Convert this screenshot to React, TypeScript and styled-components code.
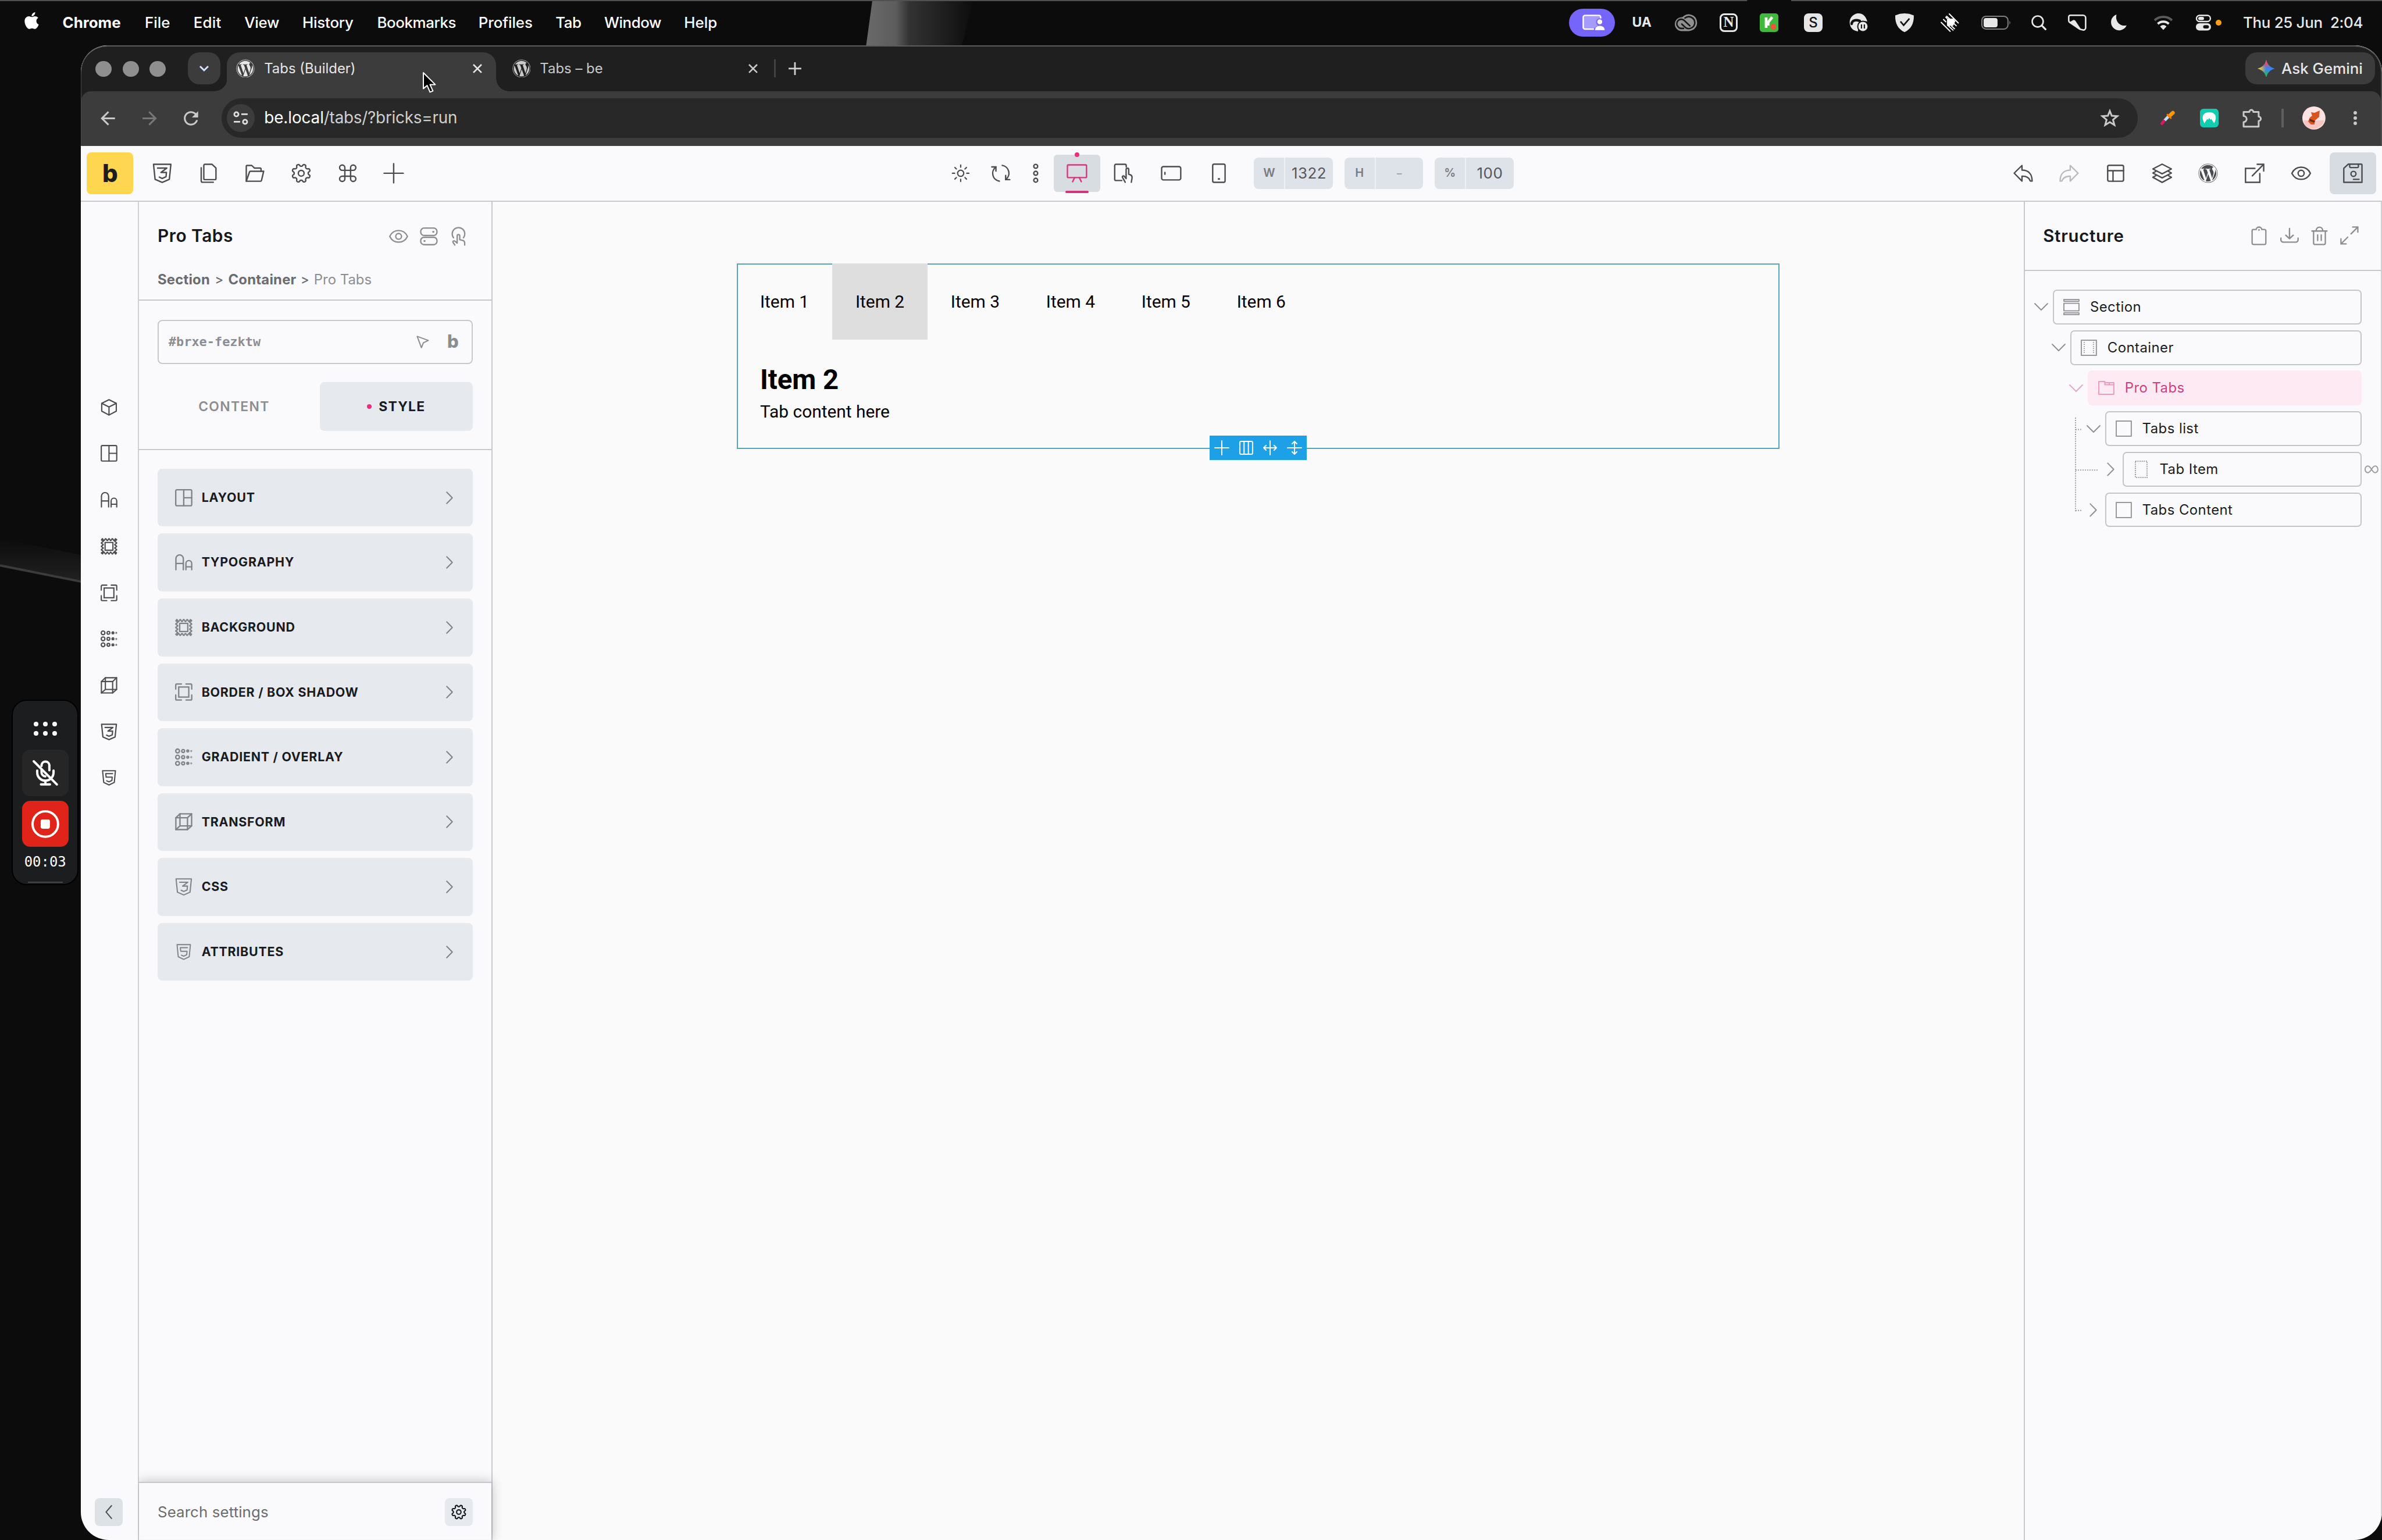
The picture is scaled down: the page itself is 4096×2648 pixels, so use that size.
import React from "react";
import styled, { createGlobalStyle, css } from "styled-components";
import { FaApple, FaWordpress } from "react-icons/fa";
import { MdArrowBack, MdArrowForward, MdRefresh } from "react-icons/md";

const SCALE = 4096 / 4112;
const line = "#c7c8cc";
const ink = "#4b4c50";
const muted = "#8c8d91";
const pink = "#d23a7c";
const panelBg = "#fafafc";

const GlobalStyle = createGlobalStyle`
  *, *::before, *::after { box-sizing: border-box; }
  html, body { margin: 0; padding: 0; background: #0b0b0b; overflow: hidden; }
  body { font-family: Inter, "Liberation Sans", sans-serif; }
`;

const Desktop = styled.div`
  position: relative;
  zoom: ${SCALE};
  width: 4112px;
  height: 2658px;
  overflow: hidden;
  display: flex;
  flex-direction: column;
  background: #0b0b0b;
`;

const Wallpaper = styled.svg`
  position: absolute;
  inset: 0;
  width: 4112px;
  height: 2658px;
`;

const Text = styled.span<{ $s: number; $w?: number; $c?: string; $ls?: number }>`
  display: block;
  white-space: pre;
  line-height: 1;
  font-size: ${(p) => p.$s}px;
  font-weight: ${(p) => p.$w ?? 400};
  color: ${(p) => p.$c ?? "inherit"};
  letter-spacing: ${(p) => p.$ls ?? 0}px;
`;

const Glyph = styled.svg.attrs({ fill: "none", stroke: "currentColor" })<{ $w: number; $h?: number; $sw?: number }>`
  display: block;
  flex: none;
  width: ${(p) => p.$w}px;
  height: ${(p) => p.$h ?? p.$w}px;
  stroke-width: ${(p) => p.$sw ?? 2.4};
  stroke-linejoin: round;
  stroke-linecap: round;
  overflow: visible;
`;

const Cell = styled.div<{ $w: number; $ml?: number; $c?: string; $start?: boolean; $h?: number }>`
  flex: none;
  width: ${(p) => p.$w}px;
  ${(p) => p.$h && css`height: ${p.$h}px;`}
  margin-left: ${(p) => p.$ml ?? 0}px;
  color: ${(p) => p.$c ?? "inherit"};
  display: flex;
  align-items: center;
  justify-content: ${(p) => (p.$start ? "flex-start" : "center")};
`;

/* ---------- icon drawings ---------- */

function gearPath(c: number, base: number, amp: number, teeth: number) {
  let d = "";
  for (let i = 0; i <= 160; i++) {
    const a = (i / 160) * Math.PI * 2;
    const k = -Math.cos(a * teeth + (teeth * Math.PI) / 2);
    const r = base + amp * Math.tanh(k * 1.8);
    d += `${i ? "L" : "M"}${(c + r * Math.cos(a)).toFixed(2)} ${(c + r * Math.sin(a)).toFixed(2)}`;
  }
  return d + "Z";
}

function scallopPath() {
  const lo = 3, hi = 27, n = 48;
  const pts: string[] = [];
  const off = (t: number) => -1.7 * Math.cos(t * Math.PI * 2 * 4);
  for (let i = 0; i < n; i++) { const t = i / n; pts.push(`${lo + (hi - lo) * t} ${lo + off(t)}`); }
  for (let i = 0; i < n; i++) { const t = i / n; pts.push(`${hi - off(t)} ${lo + (hi - lo) * t}`); }
  for (let i = 0; i < n; i++) { const t = i / n; pts.push(`${hi - (hi - lo) * t} ${hi - off(t)}`); }
  for (let i = 0; i < n; i++) { const t = i / n; pts.push(`${lo + off(t)} ${hi - (hi - lo) * t}`); }
  return "M" + pts.join("L") + "Z";
}

const shapes: Record<string, { vb: string; body: React.ReactNode }> = {
  css3: { vb: "0 0 34 34", body: <><path d="M2 1.5H32L29.3 27.5L17 32.8L4.7 27.5Z" /><path d="M9 8H25L14.8 15.5H24.3L23.6 23L17 26L12 23.6" /></> },
  html5: { vb: "0 0 34 34", body: <><path d="M3 1.5H31L28.5 27L17 32.5L5.5 27Z" /><path d="M24.8 8H9.8L10.8 15.5H24L23.2 22.8L17 25.8L12 23.6" /></> },
  pages: { vb: "0 0 34 34", body: <><path d="M8.5 3.5a2 2 0 0 1 2-2H22.5L29.5 8V26a2 2 0 0 1-2 2H10.5a2 2 0 0 1-2-2Z" /><path d="M4 7.5V30a2.5 2.5 0 0 0 2.5 2.5H25" /></> },
  folder: { vb: "0 0 34 34", body: <><path d="M2.5 30.5V5A1.5 1.5 0 0 1 4 3.5H12l4.5 4.5H26.5a1.5 1.5 0 0 1 1.5 1.5V13.5" /><path d="M2.5 30.8L8 14.8A1.8 1.8 0 0 1 9.7 13.5H32.5L28.8 29.4a1.8 1.8 0 0 1-1.8 1.4Z" /></> },
  gear: { vb: "0 0 34 34", body: <><path d={gearPath(17, 14, 2, 8)} /><circle cx="17" cy="17" r="5" /></> },
  command: { vb: "0 0 24 24", body: <path d="M15.5 5.2v13.6a3.2 3.2 0 1 0 3.2-3.2H5.3a3.2 3.2 0 1 0 3.2 3.2V5.2a3.2 3.2 0 1 0-3.2 3.2h13.4a3.2 3.2 0 1 0-3.2-3.2" /> },
  plus: { vb: "0 0 34 34", body: <path d="M17 .5V33.5M.5 17H33.5" /> },
  sun: { vb: "0 0 30 30", body: <><circle cx="15" cy="15" r="5.3" /><path d="M15 .8V4.5M15 25.5v3.7M.8 15H4.5M25.5 15h3.7M5 5l2.6 2.6M22.4 22.4L25 25M5 25l2.6-2.6M22.4 7.6L25 5" /></> },
  refresh: { vb: "0 0 34 34", body: <><path d="M8.5 6.2A13.6 13.6 0 0 0 14.5 30.6M25.5 27.8A13.6 13.6 0 0 0 19.5 3.4" /><path d="M1.5 6H8.6V13.2M32.5 28H25.4V20.8" strokeLinejoin="miter" /></> },
  more: { vb: "0 0 12 34", body: <><circle cx="6" cy="5" r="3.4" /><circle cx="6" cy="17" r="3.4" /><circle cx="6" cy="29" r="3.4" /></> },
  desktop: { vb: "0 0 36 32", body: <><rect x="1.5" y="1.5" width="33" height="22" rx="1.5" /><path d="M14 23.5L10.5 30.5M22 23.5L25.5 30.5" /></> },
  tabletTouch: { vb: "0 0 34 34", body: <><path d="M14 29.5H4A2.2 2.2 0 0 1 1.8 27.3V3.7A2.2 2.2 0 0 1 4 1.5H19.5A2.2 2.2 0 0 1 21.7 3.7V6" /><path d="M20 32.5L15.3 24.2C14.2 22 17 20.6 18.4 22.4L21.5 26.2V10.5C21.5 7.5 26 7.5 26 10.5V18.6L29 19.8C31.6 20.8 32 22.4 31.8 25L30.5 32.5" /></> },
  tabletWide: { vb: "0 0 36 26", body: <><rect x="1.5" y="1.5" width="33" height="23" rx="3" /><path d="M7.2 11.5v3" /></> },
  phone: { vb: "0 0 24 34", body: <><rect x="1.3" y="1.3" width="21.4" height="31.4" rx="2.5" /><path d="M11.4 26.8h1.2" strokeWidth="3" /></> },
  undo: { vb: "0 0 34 30", body: <path d="M1.5 14.8L15 1.5V9.6C27 9.6 32.5 17 32.5 28.5H29.5C27 21.5 22 19.8 15 20V28.5Z" /> },
  redo: { vb: "0 0 34 30", body: <path d="M32.5 14.8L19 1.5V9.6C7 9.6 1.5 17 1.5 28.5H4.5C7 21.5 12 19.8 19 20V28.5Z" /> },
  template: { vb: "0 0 30 30", body: <><rect x="1.3" y="1.3" width="27.4" height="27.4" rx="2.5" /><path d="M1.3 10.5H28.7M10.5 10.5V28.7" /></> },
  layers: { vb: "0 0 36 34", body: <><path d="M18 1.2L34 9.5L18 18L2 9.5Z" /><path d="M7.5 13.5L2 16.6L18 25L34 16.6L28.5 13.5" /><path d="M7.5 20.8L2 24L18 32.8L34 24L28.5 20.8" /></> },
  external: { vb: "0 0 34 34", body: <><path d="M17.5 8.5H1.3V32.7H26V17.5" strokeLinejoin="miter" /><path d="M13 21.5L32.3 1.8M21.5 1.5H32.7V13" strokeLinejoin="miter" /></> },
  eye: { vb: "0 0 34 24", body: <><path d="M1 12C4.5 4.8 11 1.5 17 1.5S29.5 4.8 33 12C29.5 19.2 23 22.5 17 22.5S4.5 19.2 1 12Z" /><circle cx="17" cy="12" r="5.2" /></> },
  save: { vb: "0 0 34 34", body: <><path d="M9 1.3H31.2a1.5 1.5 0 0 1 1.5 1.5V32.7H1.3V8.5Z" /><path d="M11.5 1.3V5.6A1.5 1.5 0 0 0 13 7.1H25A1.5 1.5 0 0 0 26.5 5.6V1.3M18 27.5H27.5" /><circle cx="18" cy="18" r="4.3" /></> },
  toggles: { vb: "0 0 32 32", body: <><rect x="1.5" y="1.2" width="29" height="13.2" rx="6" /><rect x="1.5" y="17.6" width="29" height="13.2" rx="6" /><path d="M23.7 7.8h.6M8 24.2h.6" strokeWidth="3.4" /></> },
  touch: { vb: "0 0 32 34", body: <><path d="M7.2 19.5A11.2 11.2 0 1 1 24.8 19.5" /><path d="M9.5 32.5L6.5 28.2C5 25.8 7.8 24 9.6 25.6L13.6 29V16C13.6 13 18.2 13 18.2 16V23L23.5 24.2C26.5 25 27.2 26.8 27 29.5V32.5" /></> },
  pointer: { vb: "0 0 24 24", body: <path d="M1.5 1.5L22.5 9.2L13.2 13.6L9.5 22.8Z" /> },
  box: { vb: "0 0 30 30", body: <><path d="M15 1.3L28 7.8V21.8L15 28.7L2 21.8V7.8Z" /><path d="M2 7.8L15 14.3L28 7.8M15 14.3V28.7" /></> },
  layout: { vb: "0 0 30 30", body: <><rect x="1.2" y="1.2" width="27.6" height="27.6" rx="2" /><path d="M15 1.2V28.8M15 15H28.8" /></> },
  type: { vb: "0 0 30 30", body: <><path d="M1.5 27.8V8.5a6.4 6.4 0 0 1 12.8 0V27.8M1.5 17H14.3" /><path d="M18.8 27.8V17a5 5 0 0 1 10 0V27.8M18.8 22.8H28.8" /></> },
  background: { vb: "0 0 30 30", body: <><path d={scallopPath()} /><rect x="8" y="8" width="14" height="14" /></> },
  border: { vb: "0 0 30 30", body: <><rect x="6.3" y="6.3" width="17.4" height="17.4" strokeLinejoin="miter" /><path d="M1.2 10V3A1.8 1.8 0 0 1 3 1.2H11M19 1.2H27A1.8 1.8 0 0 1 28.8 3V10M28.8 20V27A1.8 1.8 0 0 1 27 28.8H19M11 28.8H3A1.8 1.8 0 0 1 1.2 27V20" /></> },
  gradient: { vb: "0 0 30 30", body: <>{[4.3, 15, 25.7].map((y) => <g key={y}><circle cx="4.4" cy={y} r="3.3" /><circle cx="14" cy={y} r="2.5" /><circle cx="22" cy={y} r="1.6" /><circle cx="28" cy={y} r=".5" /></g>)}</> },
  transform: { vb: "0 0 30 30", body: <><path d="M1.4 8.2L8.5 1.4H28.6V22.3L21.5 28.6H1.4Z" /><path d="M1.4 8.2H21.5V28.6M21.5 8.2L28.6 1.4M8.5 1.4V22.3H28.6M8.5 22.3L1.4 28.6" /></> },
  right: { vb: "0 0 12 22", body: <path d="M1.2 1.2L10.8 11L1.2 20.8" /> },
  left: { vb: "0 0 12 24", body: <path d="M10.8 1L1.4 12L10.8 23" /> },
  down: { vb: "0 0 24 13", body: <path d="M1 1L12 12L23 1" /> },
  clipboard: { vb: "0 0 28 34", body: <><path d="M9 5.8H4A2.3 2.3 0 0 0 1.7 8.1V30.2A2.3 2.3 0 0 0 4 32.5H24A2.3 2.3 0 0 0 26.3 30.2V8.1A2.3 2.3 0 0 0 24 5.8H19C18.8 0 9.2 0 9 5.8" /><path d="M14 6.5v.1" strokeWidth="3" /></> },
  download: { vb: "0 0 32 26", body: <><path d="M1.2 17.5V20.5A4 4 0 0 0 5.2 24.5H26.8A4 4 0 0 0 30.8 20.5V17.5" /><path d="M16 1V18M9.5 12.5L16 18.5L22.5 12.5" /></> },
  trash: { vb: "0 0 30 34", body: <path d="M1.5 8.5H28.5M9 8.5C9 -.8 21 -.8 21 8.5M4.5 8.5V30A2.2 2.2 0 0 0 6.7 32.5H23.3A2.2 2.2 0 0 0 25.5 30V8.5M11.8 15.5V25.5M18.2 15.5V25.5" /> },
  expand: { vb: "0 0 34 34", body: <path d="M20 14L32 2M23 1.5H32.5V11M14 20L2 32M1.5 23V32.5H11" strokeLinejoin="miter" /> },
  section: { vb: "0 0 28 28", body: <><rect x="1" y="1" width="26" height="3" /><rect x="1" y="7.5" width="26" height="13" /><rect x="1" y="24" width="26" height="3" /></> },
  container: { vb: "0 0 28 28", body: <><rect x="1" y="1" width="26" height="26" /><path d="M6 4V25M22 4V25" strokeDasharray="1.5 2" strokeLinecap="butt" /></> },
  block: { vb: "0 0 28 28", body: <rect x="1" y="1" width="26" height="26" /> },
  div: { vb: "0 0 28 28", body: <rect x="4" y="0" width="20" height="28" strokeDasharray="1.8 1.8" strokeLinecap="butt" /> },
  tabs: { vb: "0 0 28 24", body: <><path d="M1 1H11.5V6.5H27V23H1Z" /><path d="M11.5 3H27V6.5M19 3V6.5" /></> },
  infinity: { vb: "0 0 24 14", body: <path d="M12 7C9.5 3 8 1.2 5.8 1.2a4.8 5.8 0 0 0 0 11.6C8 12.8 9.5 11 12 7C14.5 3 16 1.2 18.2 1.2a4.8 5.8 0 0 1 0 11.6C16 12.8 14.5 11 12 7Z" /> },
  columns: { vb: "0 0 24 24", body: <><rect x="1" y="1" width="22" height="22" rx="2" /><path d="M8.3 1V23M15.7 1V23" /></> },
  splitH: { vb: "0 0 24 24", body: <path d="M12 0V24M1 12H23M5 8L1 12L5 16M19 8L23 12L19 16" /> },
  splitV: { vb: "0 0 24 24", body: <path d="M0 12H24M12 1V23M8 5L12 1L16 5M8 19L12 23L16 19" /> },
  star: { vb: "0 0 30 30", body: <path d="M15 3.5L18.1 11.3L27.2 12L20.200 17.800L22.500 26.300L15 21.600L7.500 26.300L9.800 17.800L2.800 12L11.900 11.300Z" strokeLinejoin="miter" /> },
  puzzle: { vb: "0 0 34 34", body: <path d="M2 6.500H12A3.400 3.400 0 0 1 18.800 6.500H28V14.500A3.700 3.700 0 0 1 28 22V32H2V24A5 5 0 0 0 2 13.500Z" /> },
};

type IconProps = { name: string; w: number; h?: number; sw?: number };
const Icon = ({ name, w, h, sw }: IconProps) => (
  <Glyph viewBox={shapes[name].vb} $w={w} $h={h} $sw={sw}>{shapes[name].body}</Glyph>
);

/* ---------- macOS menu bar ---------- */

const MenuBar = styled.header`
  position: relative;
  flex: none;
  height: 78px;
  display: flex;
  align-items: center;
  padding: 0 34px 0 41px;
  color: #fff;
`;
const MenuItem = styled.div<{ $w: number }>`
  flex: none;
  width: ${(p) => p.$w}px;
`;
const AppleLogo = styled(FaApple)`
  display: block;
  margin: -6px 0 0 -3px;
`;
const Tray = styled.div`
  margin-left: auto;
  display: flex;
  align-items: center;
  color: #e8e8e8;
`;
const SharePill = styled.div`
  width: 80px;
  height: 48px;
  border-radius: 24px;
  background: #7565fb;
  display: flex;
  align-items: center;
  justify-content: center;
  padding-left: 6px;
`;
const Badge = styled.div<{ $bg: string; $c: string; $r: number; $line?: boolean }>`
  width: 32px;
  height: 32px;
  border-radius: ${(p) => p.$r}px;
  background: ${(p) => p.$bg};
  color: ${(p) => p.$c};
  ${(p) => p.$line && css`border: 3.5px solid #e8e8e8;`}
  display: flex;
  align-items: center;
  justify-content: center;
`;
const SerifLetter = styled.span`
  font: 700 25px/1 "Liberation Serif", serif;
`;
const OrangeDot = styled.div`
  width: 10px;
  height: 10px;
  border-radius: 50%;
  background: #ff9f14;
`;

const menus: [string, number, number][] = [
  ["Chrome", 142, 0], ["File", 84, 0], ["Edit", 88, 0.2], ["View", 100, -0.3], ["History", 129, -0.2],
  ["Bookmarks", 175, -0.4], ["Profiles", 133, -0.1], ["Tab", 84, -0.5], ["Window", 138, -0.4], ["Help", 80, 0],
];

const TopMenu = () => (
  <MenuBar>
    <MenuItem $w={67}><AppleLogo size={33} /></MenuItem>
    {menus.map(([label, w, ls], i) => (
      <MenuItem key={label} $w={w}><Text $s={26} $w={i ? 500 : 700} $ls={ls}>{label}</Text></MenuItem>
    ))}
    <Tray>
      <SharePill>
        <Glyph viewBox="0 0 40 28" $w={40} $h={28} $sw={2.6}>
          <rect x="3" y="3" width="27" height="20" fill="#a59bfd" stroke="none" />
          <path d="M19 25H4.5A3 3 0 0 1 1.5 22V4.5A3 3 0 0 1 4.5 1.5H28.5A3 3 0 0 1 31.5 4.5V6" stroke="#fff" />
          <circle cx="30" cy="13" r="6.5" fill="#7565fb" stroke="none" />
          <circle cx="30" cy="12.5" r="4.3" fill="#fff" stroke="none" />
          <path d="M21.5 27c0-5 3.5-8 8.5-8s9 3 9 8z" fill="#fff" stroke="#7565fb" strokeWidth="1" />
        </Glyph>
      </SharePill>
      <Cell $w={34} $ml={29}><Text $s={23} $w={700}>UA</Text></Cell>
      <Cell $w={40} $ml={39} $c="#909090">
        <Glyph viewBox="0 0 40 30" $w={40} $h={30}>
          <path d="M12 29.5H25A14.5 14.5 0 1 0 14 5.5A12 12 0 0 0 12 29.5Z" fill="currentColor" stroke="none" />
          <path d="M27 20.5L17.5 11.5A7.5 7.5 0 0 0 6.5 22A7.5 7.5 0 0 0 12 25H16" stroke="#161616" strokeWidth="2.6" />
          <path d="M13 17.5L20 24A10.5 10.5 0 0 0 35.5 15A10.5 10.5 0 0 0 18.5 7" stroke="#161616" strokeWidth="2.6" />
        </Glyph>
      </Cell>
      <Cell $w={32} $ml={38}><Badge $bg="transparent" $c="#e8e8e8" $r={8} $line><SerifLetter>N</SerifLetter></Badge></Cell>
      <Cell $w={32} $ml={38}>
        <Badge $bg="#41b93c" $c="#fff" $r={5}>
          <Glyph viewBox="0 0 32 32" $w={32} $sw={4.6}>
            <path d="M11 7V25M21.5 6.5L14.5 15.5V21" strokeLinecap="butt" />
            <circle cx="23.5" cy="23" r="5" fill="#f4523b" stroke="none" />
          </Glyph>
        </Badge>
      </Cell>
      <Cell $w={32} $ml={44}><Badge $bg="#e6e6e6" $c="#111" $r={8}><Text $s={24} $w={500}>S</Text></Badge></Cell>
      <Cell $w={32} $ml={46}>
        <Glyph viewBox="0 0 32 32" $w={32} $sw={2}>
          <path d="M2 22C-3 8 8 0 16 0S29 6 31 14C24 12 16 14 15 24V31C8 30 4 27 2 22Z" fill="currentColor" stroke="none" />
          <path d="M4 18C5 11 12 11 18 13" stroke="#111" strokeWidth="4.5" /><circle cx="12" cy="15.5" r="1.8" fill="#e8e8e8" stroke="none" />
          <circle cx="23.5" cy="22.5" r="9" fill="currentColor" stroke="#111" />
          <path d="M21 19V26M26 19V26" stroke="#111" strokeLinecap="butt" />
        </Glyph>
      </Cell>
      <Cell $w={32} $ml={48}>
        <Glyph viewBox="0 0 32 32" $w={32} $sw={2.6}>
          <path d="M0 3.5Q16 -3.5 32 3.5C32.5 18 27 27 16 32.5C5 27 -.5 18 0 3.5Z" fill="currentColor" stroke="none" />
          <path d="M9 14L14.5 20.5L24.5 9" stroke="#111" strokeLinecap="butt" strokeLinejoin="miter" />
        </Glyph>
      </Cell>
      <Cell $w={32} $ml={46} $c="#fff">
        <Glyph viewBox="0 0 32 32" $w={32} $sw={2}>
          <path d="M11 9H22L25.500 13.500L21.500 21.500H11Z" fill="currentColor" stroke="none" />
          <path d="M15 1L30.5 16.5M10.5 5L16 10M20.5 15L27 21.5M5.5 11L9 14.5M1 15.5L16.5 31M5 10.5L7 12.5M13 21L21.5 29M19 22L24 26.5M9 6.5L11 8.5" />
        </Glyph>
      </Cell>
      <Cell $w={52} $ml={38}>
        <Glyph viewBox="0 0 52 24" $w={52} $h={24} $sw={2}>
          <rect x="1" y="1" width="45" height="22" rx="7" stroke="#808080" />
          <rect x="4" y="4" width="24" height="16" rx="4" fill="currentColor" stroke="none" />
          <path d="M48.5 8.5Q51.5 12 48.5 15.5Z" fill="#808080" stroke="none" />
        </Glyph>
      </Cell>
      <Cell $w={28} $ml={34}><Glyph viewBox="0 0 28 28" $w={28} $sw={2.6}><circle cx="12" cy="12" r="9.5" /><path d="M19 19L25.5 25.5" strokeWidth="3.2" /></Glyph></Cell>
      <Cell $w={32} $ml={36}>
        <Glyph viewBox="0 0 32 28" $w={32} $h={28} $sw={2.6}>
          <path d="M4 1.3H26A4.5 4.5 0 0 1 30.5 5.8V23A3.8 3.8 0 0 1 25 26.3L20 25L3 13.5A4 4 0 0 1 1.3 10V4A2.7 2.7 0 0 1 4 1.3Z" />
          <path d="M3 13L9 9.5Q11.5 9 13 11L23 26L20 25.5Z" fill="currentColor" stroke="none" />
        </Glyph>
      </Cell>
      <Cell $w={28} $ml={41}><Glyph viewBox="0 0 28 28" $w={28}><path d="M10.5 0A14 14 0 1 0 28 18.5C18 21.5 7.5 13 10.5 0Z" fill="currentColor" stroke="none" /></Glyph></Cell>
      <Cell $w={34} $ml={46}>
        <Glyph viewBox="0 0 34 26" $w={34} $h={26} $sw={4}>
          <path d="M2 9A22 22 0 0 1 32 9" stroke="#5a5a5a" strokeLinecap="butt" />
          <path d="M7.5 15A14 14 0 0 1 26.5 15" strokeLinecap="butt" />
          <path d="M11.5 19.5Q17 14.5 22.5 19.5L17 25.5Z" fill="currentColor" stroke="none" />
        </Glyph>
      </Cell>
      <Cell $w={28} $ml={39}>
        <Glyph viewBox="0 0 28 28" $w={28} $sw={2.4}>
          <rect x="2" y="1.5" width="24" height="10.5" rx="5.2" /><rect x="5" y="4" width="10" height="5.5" rx="2.7" fill="currentColor" stroke="none" />
          <rect x="1" y="15" width="26" height="12.5" rx="6" fill="currentColor" stroke="none" /><rect x="13.5" y="18.2" width="10" height="6" rx="3" fill="#111" stroke="none" />
        </Glyph>
      </Cell>
      <Cell $w={10} $ml={7}><OrangeDot /></Cell>
      <Cell $w={205} $ml={38}><Text $s={26} $w={500} $ls={-0.3}>Thu 25 Jun  2:04</Text></Cell>
    </Tray>
  </MenuBar>
);

/* ---------- recorder ---------- */

const Work = styled.div`
  position: relative;
  flex: 1;
  min-height: 0;
  display: flex;
`;
const Dock = styled.aside`
  flex: none;
  width: 140px;
  padding: 1132px 6px 0 22px;
`;
const Recorder = styled.div`
  height: 316px;
  border-radius: 24px;
  background: #1c1d1f;
  box-shadow: 0 0 0 2px #000;
  color: #fff;
  display: flex;
  flex-direction: column;
  align-items: center;
  padding-top: 36px;
`;
const Grip = styled.div`
  display: grid;
  grid-template-columns: repeat(3, 8px);
  gap: 8px;
`;
const GripDot = styled.i`
  width: 8px;
  height: 8px;
  border-radius: 50%;
  background: #fff;
`;
const RecButton = styled.div<{ $bg: string; $mt: number }>`
  width: 80px;
  height: 80px;
  margin-top: ${(p) => p.$mt}px;
  border-radius: 14px;
  background: ${(p) => p.$bg};
  display: flex;
  align-items: center;
  justify-content: center;
`;
const Timer = styled.div`
  margin-top: 15px;
  font: 400 24px/24px "DejaVu Sans Mono", monospace;
`;
const HomeBar = styled.div`
  width: 60px;
  height: 2px;
  margin-top: 21px;
  background: #47484a;
`;

const RecorderWidget = () => (
  <Recorder>
    <Grip>{Array.from({ length: 6 }, (_, i) => <GripDot key={i} />)}</Grip>
    <RecButton $bg="#262627" $mt={24}>
      <Glyph viewBox="0 0 44 44" $w={44} $sw={4}>
        <path d="M15.5 10V8.5A6.8 6.8 0 0 1 29 8.5V17.5M15.5 17V21A6.8 6.8 0 0 0 22 28" />
        <path d="M8 18V21.5A14.2 14.2 0 0 0 22 35.5A14.2 14.2 0 0 0 36.2 21.5V18M22.2 35.5V42M14.5 42H30M2 2L42 42" />
      </Glyph>
    </RecButton>
    <RecButton $bg="#e02419" $mt={8}>
      <Glyph viewBox="0 0 48 48" $w={48} $sw={4}><circle cx="24" cy="24" r="22" /><rect x="16" y="16" width="16" height="16" rx="3.5" fill="#fff" stroke="none" /></Glyph>
    </RecButton>
    <Timer>00:03</Timer>
    <HomeBar />
  </Recorder>
);

/* ---------- browser window ---------- */

const Window = styled.main`
  flex: 1;
  min-width: 0;
  display: flex;
  flex-direction: column;
  border-radius: 46px 46px 48px 48px;
  overflow: hidden;
  background: ${panelBg};
`;
const Chrome = styled.div`
  flex: none;
  border: 2.02px solid #5c5c5c;
  border-bottom: 0;
  border-left: 1.01px solid #4b4b4b;
  border-right-color: #4b4b4b;
  border-radius: 46px 46px 0 0;
  background: #1f1f1f;
  overflow: hidden;
`;
const Strip = styled.div`
  height: 78px;
  padding: 10px 10px 0 24px;
  display: flex;
  align-items: flex-start;
`;
const Lights = styled.div`
  height: 58px;
  display: flex;
  align-items: center;
  gap: 18.5px;
`;
const Light = styled.i`
  width: 28px;
  height: 28px;
  border-radius: 50%;
  background: #8f8f8f;
`;
const StripButton = styled.div<{ $w: number; $ml?: string }>`
  width: ${(p) => p.$w}px;
  height: 56px;
  margin-left: ${(p) => p.$ml ?? "0"};
  border-radius: 20px;
  background: #3c3c3c;
  color: #e6e6e6;
  display: flex;
  align-items: center;
  justify-content: center;
  gap: 11px;
`;
const Tab = styled.div<{ $on?: boolean }>`
  position: relative;
  width: 464px;
  height: 68px;
  margin-left: 12px;
  padding: 0 22px 12px 16px;
  display: flex;
  align-items: center;
  gap: 16px;
  color: ${(p) => (p.$on ? "#e6e6e6" : "#c9c9c9")};
  ${(p) => p.$on && css`
    background: #3c3c3c;
    border-radius: 22px 22px 0 0;
    &::before, &::after {
      content: "";
      position: absolute;
      bottom: 0;
      width: 22px;
      height: 22px;
    }
    &::before { left: -22px; background: radial-gradient(circle at 0 0, transparent 21.5px, #3c3c3c 22px); }
    &::after { right: -22px; background: radial-gradient(circle at 100% 0, transparent 21.5px, #3c3c3c 22px); }
  `}
`;
const TabClose = styled.div`
  margin-left: auto;
  width: 20px;
  display: flex;
  justify-content: center;
`;
const StripRule = styled.i`
  width: 3px;
  height: 32px;
  margin: 12px 0 0 4px;
  background: #424242;
`;
const NavBar = styled.div`
  height: 94px;
  padding: 0 28px 2px 9px;
  border-radius: 16px 16px 0 0;
  background: #3c3c3c;
  color: #c9c9c9;
  display: flex;
  align-items: center;
`;
const Omnibox = styled.div`
  flex: 1;
  height: 68px;
  margin: 0 16px;
  padding: 0 32px 0 10px;
  border-radius: 34px;
  background: #282828;
  display: flex;
  align-items: center;
`;
const SiteInfo = styled.div`
  width: 48px;
  height: 48px;
  margin-right: 16px;
  border-radius: 50%;
  background: #3c3c3c;
  color: #e0e0e0;
  display: flex;
  align-items: center;
  justify-content: center;
`;
const StarSlot = styled.div`
  margin-left: auto;
  display: flex;
`;
const NavRule = styled.i`
  width: 4px;
  height: 32px;
  margin-left: 12px;
  background: #5f5f5f;
`;

const CloseX = () => <Glyph viewBox="0 0 16 16" $w={16} $sw={2.6}><path d="M1 1L15 15M15 1L1 15" strokeLinecap="butt" /></Glyph>;

const BrowserChrome = () => (
  <Chrome>
    <Strip>
      <Lights><Light /><Light /><Light /></Lights>
      <StripButton $w={56} $ml="38px"><Glyph viewBox="0 0 16 10" $w={16} $h={10} $sw={3}><path d="M1 1L8 8L15 1" stroke="#d3e3fd" strokeLinecap="butt" strokeLinejoin="miter" /></Glyph></StripButton>
      <Tab $on><FaWordpress size={32} /><Text $s={24}>Tabs (Builder)</Text><TabClose><CloseX /></TabClose></Tab>
      <Tab><FaWordpress size={32} /><Text $s={24}>Tabs – be</Text><TabClose><CloseX /></TabClose></Tab>
      <StripRule />
      <Cell $w={66} $h={56}><Glyph viewBox="0 0 22 22" $w={22} $sw={2.8}><path d="M11 0V22M0 11H22" strokeLinecap="butt" stroke="#d0d0d0" /></Glyph></Cell>
      <StripButton $w={224} $ml="auto">
        <svg width="30" height="30" viewBox="0 0 30 30">
          <defs>
            <radialGradient id="gr" cx=".5" cy="0" r=".5"><stop offset=".3" stopColor="#ef4a55" /><stop offset="1" stopColor="#ef4a55" stopOpacity="0" /></radialGradient>
            <radialGradient id="gy" cx="0" cy=".5" r=".5"><stop offset=".3" stopColor="#f9c125" /><stop offset="1" stopColor="#f9c125" stopOpacity="0" /></radialGradient>
            <radialGradient id="gg" cx=".45" cy="1" r=".5"><stop offset=".3" stopColor="#2bb45a" /><stop offset="1" stopColor="#2bb45a" stopOpacity="0" /></radialGradient>
          </defs>
          {["#3b82f6", "url(#gg)", "url(#gy)", "url(#gr)"].map((f) => <path key={f} fill={f} d="M15 0C17 8 22 13 30 15C22 17 17 22 15 30C13 22 8 17 0 15C8 13 13 8 15 0Z" />)}
        </svg>
        <Text $s={26} $w={500}>Ask Gemini</Text>
      </StripButton>
    </Strip>
    <NavBar>
      <Cell $w={72}><MdArrowBack size={37} /></Cell>
      <Cell $w={72} $c="#777"><MdArrowForward size={37} /></Cell>
      <Cell $w={72}><MdRefresh size={37} /></Cell>
      <Omnibox>
        <SiteInfo>
          <Glyph viewBox="0 0 26 24" $w={26} $h={24} $sw={2.8}><circle cx="5.5" cy="5.5" r="3.6" /><circle cx="20.5" cy="18.5" r="3.6" /><path d="M14 5.5H25M1 18.5H12" strokeLinecap="butt" /></Glyph>
        </SiteInfo>
        <Text $s={28} $c="#fff" $ls={-0.1}>be.local</Text>
        <Text $s={28} $c="#cfcfcf" $ls={-0.25}>/tabs/?bricks=run</Text>
        <StarSlot><Icon name="star" w={32} sw={2.8} /></StarSlot>
      </Omnibox>
      <Cell $w={72}>
        <Glyph viewBox="0 0 26 26" $w={26} $sw={5}>
          <path d="M3.5 22.5L8 17" stroke="#d81b60" /><path d="M8.5 17L15 10" stroke="#bbdefb" strokeLinecap="butt" /><path d="M17 9L22.5 4" stroke="#ff9800" strokeWidth="6.5" /><path d="M13 7L19 13" stroke="#f57c00" strokeWidth="3" />
        </Glyph>
      </Cell>
      <Cell $w={72}>
        <Badge $bg="#12ccb2" $c="#fff" $r={6}><Glyph viewBox="0 0 32 32" $w={32}><path d="M7.5 25C0 10 9 6 16 6S32 10 24.5 25L19.5 17.5L18 19L16 15.5L14 19L12.5 17.5Z" fill="#fff" stroke="none" /></Glyph></Badge>
      </Cell>
      <Cell $w={76}><Icon name="puzzle" w={34} sw={3} /></Cell>
      <NavRule />
      <Cell $w={40} $ml={32}>
        <Glyph viewBox="0 0 40 40" $w={40}><circle cx="20" cy="20" r="20" fill="#fde4e2" stroke="none" /><path d="M2 24H38A19 19 0 0 1 4 31Z" fill="#f8c6c2" stroke="none" /><path d="M15 10L21 11L30 7L29 18L22 24L21 31L15 31L10 26L13 19L17 16Z" fill="#d9541e" stroke="none" /><path d="M12 21L22 25L20 28L13 25Z" fill="#6b2a14" stroke="none" /></Glyph>
      </Cell>
      <Cell $w={32} $ml={36}><Glyph viewBox="0 0 6 26" $w={6} $h={26}><g fill="currentColor" stroke="none"><circle cx="3" cy="4" r="3" /><circle cx="3" cy="13" r="3" /><circle cx="3" cy="22" r="3" /></g></Glyph></Cell>
    </NavBar>
  </Chrome>
);

/* ---------- builder toolbar ---------- */

const AppBar = styled.div`
  flex: none;
  height: 96px;
  padding: 0 10px;
  border-bottom: 2.02px solid ${line};
  color: ${ink};
  display: flex;
  align-items: center;
`;
const Logo = styled.div`
  width: 80px;
  height: 72px;
  margin-right: 10px;
  border-radius: 8px;
  background: #ffd64f;
  color: #1d1d1b;
  display: flex;
  align-items: center;
  justify-content: center;
`;
const Breakpoint = styled.div`
  position: relative;
  width: 80px;
  height: 64px;
  margin-left: 7px;
  border-radius: 6px;
  background: #d8dde1;
  color: ${pink};
  display: flex;
  align-items: center;
  justify-content: center;
  &::before {
    content: "";
    position: absolute;
    top: -4px;
    left: 36px;
    width: 8px;
    height: 8px;
    border-radius: 50%;
    background: #e8307c;
  }
  &::after {
    content: "";
    position: absolute;
    bottom: -2px;
    left: 20px;
    width: 40px;
    height: 4px;
    border-radius: 2px;
    background: #d0357a;
  }
`;
const Field = styled.div`
  width: 136px;
  height: 54px;
  margin-left: 20px;
  border-radius: 8px;
  background: #dee2e9;
  display: grid;
  grid-template-columns: 54px 1fr;
  align-items: center;
  justify-items: center;
`;
const FieldKey = styled.div`
  width: 100%;
  height: 54px;
  border-right: 2.02px solid #eef1f4;
  color: #797b80;
  display: flex;
  align-items: center;
  justify-content: center;
`;
const SaveButton = styled.div`
  width: 80px;
  height: 72px;
  margin-left: 10px;
  border-radius: 8px;
  background: #d7dbe2;
  display: flex;
  align-items: center;
  justify-content: center;
`;
const RightTools = styled.div`
  margin-left: auto;
  display: flex;
  align-items: center;
`;

const Toolbar = () => (
  <AppBar>
    <Logo><Text $s={42} $w={800}>b</Text></Logo>
    {["css3", "pages", "folder", "gear"].map((n) => <Cell key={n} $w={80}><Icon name={n} w={34} /></Cell>)}
    <Cell $w={80}><Icon name="command" w={34} sw={1.7} /></Cell>
    <Cell $w={80}><Icon name="plus" w={34} /></Cell>
    <Cell $w={66} $ml={905}><Icon name="sun" w={30} sw={2.2} /></Cell>
    <Cell $w={73}><Icon name="refresh" w={34} /></Cell>
    <Cell $w={48}><Icon name="more" w={12} h={34} /></Cell>
    <Breakpoint><Icon name="desktop" w={36} h={32} /></Breakpoint>
    <Cell $w={82}><Icon name="tabletTouch" w={34} /></Cell>
    <Cell $w={82}><Icon name="tabletWide" w={36} h={26} /></Cell>
    <Cell $w={82}><Icon name="phone" w={24} h={34} /></Cell>
    {[["W", "1322", "#55575c"], ["H", "-", "#a5a7ab"], ["%", "100", "#55575c"]].map(([k, v, c]) => (
      <Field key={k}><FieldKey><Text $s={20} $w={600}>{k}</Text></FieldKey><Text $s={26} $c={c} $ls={0.5}>{v}</Text></Field>
    ))}
    <RightTools>
      <Cell $w={80}><Icon name="undo" w={34} h={30} /></Cell>
      <Cell $w={80} $c="#b9babd"><Icon name="redo" w={34} h={30} /></Cell>
      <Cell $w={80}><Icon name="template" w={30} /></Cell>
      <Cell $w={80}><Icon name="layers" w={36} h={34} /></Cell>
      <Cell $w={80}><FaWordpress size={34} /></Cell>
      <Cell $w={80}><Icon name="external" w={34} /></Cell>
      <Cell $w={80}><Icon name="eye" w={34} h={24} /></Cell>
      <SaveButton><Icon name="save" w={34} /></SaveButton>
    </RightTools>
  </AppBar>
);

/* ---------- left rail and element panel ---------- */

const Body = styled.div`
  flex: 1;
  min-height: 0;
  display: flex;
`;
const Rail = styled.nav`
  flex: none;
  width: 100px;
  padding: 315px 0 24px;
  border-right: 2.02px solid #cfd0d3;
  color: ${ink};
  display: flex;
  flex-direction: column;
`;
const RailItem = styled.div`
  width: 96px;
  height: 80px;
  display: flex;
  align-items: center;
  justify-content: center;
`;
const SquareButton = styled.div<{ $bg: string; $c: string }>`
  width: 48px;
  height: 48px;
  border-radius: 8px;
  background: ${(p) => p.$bg};
  color: ${(p) => p.$c};
  display: flex;
  align-items: center;
  justify-content: center;
`;
const RailFoot = styled.div`
  margin: auto 0 0 24px;
`;
const Panel = styled.section`
  flex: none;
  width: 610px;
  border-right: 2.02px solid ${line};
  display: flex;
  flex-direction: column;
`;
const PanelHead = styled.div`
  height: 171px;
  padding: 28px 32px 0;
  border-bottom: 2.02px solid ${line};
`;
const TitleRow = styled.div`
  height: 64px;
  display: flex;
  align-items: center;
  justify-content: space-between;
`;
const Tools = styled.div`
  display: flex;
  color: ${muted};
  margin-right: -2px;
`;
const Crumbs = styled.div`
  margin-top: 31px;
  display: flex;
  color: #6b6c70;
`;
const Selector = styled.div`
  padding: 33px 32px 32px;
  height: 258px;
  border-bottom: 2.02px solid ${line};
`;
const ClassInput = styled.div`
  height: 76px;
  padding: 0 17px 0 17px;
  border: 2.02px solid ${line};
  border-radius: 8px;
  color: ${muted};
  display: flex;
  align-items: center;
`;
const Mono = styled.span`
  margin-right: auto;
  font: 700 22px/1 "DejaVu Sans Mono", monospace;
`;
const Modes = styled.div`
  margin-top: 32px;
  display: grid;
  grid-template-columns: 1fr 1fr;
  gap: 16px;
`;
const Mode = styled.div<{ $on?: boolean }>`
  height: 84px;
  border-radius: 8px;
  background: ${(p) => (p.$on ? "#e6e9ed" : "transparent")};
  color: ${(p) => (p.$on ? "#191b22" : "#8c8d91")};
  display: flex;
  align-items: center;
  justify-content: center;
  gap: 12px;
`;
const PinkDot = styled.i`
  width: 8px;
  height: 8px;
  border-radius: 50%;
  background: #ec2f7f;
`;
const Groups = styled.div`
  flex: 1;
  padding: 32px;
  display: flex;
  flex-direction: column;
  gap: 12px;
`;
const Group = styled.div`
  flex: none;
  height: 100px;
  padding: 0 34px 0 30px;
  border-radius: 8px;
  background: #e6e9ed;
  color: #808287;
  display: flex;
  align-items: center;
`;
const GroupLabel = styled.div`
  margin: 0 auto 0 16px;
`;
const SearchBar = styled.div`
  position: relative;
  z-index: 1;
  flex: none;
  height: 100px;
  padding: 2px 32px 0;
  border-top: 2.02px solid ${line};
  background: ${panelBg};
  box-shadow: 0 0 18px rgba(30, 32, 50, 0.28);
  clip-path: inset(-30px -22px 0 -1px);
  display: flex;
  align-items: center;
  justify-content: space-between;
`;

const groups: [string, string][] = [
  ["layout", "LAYOUT"], ["type", "TYPOGRAPHY"], ["background", "BACKGROUND"], ["border", "BORDER / BOX SHADOW"],
  ["gradient", "GRADIENT / OVERLAY"], ["transform", "TRANSFORM"], ["css3", "CSS"], ["html5", "ATTRIBUTES"],
];

const LeftRail = () => (
  <Rail>
    {["box", "layout", "type", "background", "border", "gradient", "transform", "css3", "html5"].map((n) => (
      <RailItem key={n}><Icon name={n} w={n === "html5" ? 27 : 29} sw={n === "css3" || n === "html5" ? 2.6 : 2.2} /></RailItem>
    ))}
    <RailFoot><SquareButton $bg="#dde2e6" $c={ink}><Icon name="left" w={12} h={24} sw={2} /></SquareButton></RailFoot>
  </Rail>
);

const ElementPanel = () => (
  <Panel>
    <PanelHead>
      <TitleRow>
        <Text $s={30} $w={600} $c="#17181c" $ls={0.5}>Pro Tabs</Text>
        <Tools>
          <Cell $w={52}><Icon name="eye" w={33} h={23} /></Cell>
          <Cell $w={52}><Icon name="toggles" w={31} /></Cell>
          <Cell $w={52}><Icon name="touch" w={31} h={33} /></Cell>
        </Tools>
      </TitleRow>
      <Crumbs>
        <Cell $w={99} $start><Text $s={24} $w={700} $ls={0.2}>Section</Text></Cell>
        <Cell $w={23} $start><Text $s={22} $w={500}>&gt;</Text></Cell>
        <Cell $w={125} $start><Text $s={24} $w={700} $ls={0.2}>Container</Text></Cell>
        <Cell $w={23} $start><Text $s={22} $w={500}>&gt;</Text></Cell>
        <Text $s={24} $c={muted}>Pro Tabs</Text>
      </Crumbs>
    </PanelHead>
    <Selector>
      <ClassInput>
        <Mono>#brxe-fezktw</Mono>
        <Cell $w={52}><Icon name="pointer" w={22} sw={2.2} /></Cell>
        <Cell $w={30} $ml={11}><Text $s={31} $w={800}>b</Text></Cell>
      </ClassInput>
      <Modes>
        <Mode><Text $s={23} $w={600} $ls={1.3}>CONTENT</Text></Mode>
        <Mode $on><PinkDot /><Text $s={23} $w={700} $ls={1.2}>STYLE</Text></Mode>
      </Modes>
    </Selector>
    <Groups>
      {groups.map(([icon, label]) => (
        <Group key={label}>
          <Cell $w={30}><Icon name={icon} w={icon === "html5" ? 28 : 30} sw={2.3} /></Cell>
          <GroupLabel><Text $s={21.5} $w={700} $c="#191b22" $ls={0.75}>{label}</Text></GroupLabel>
          <Icon name="right" w={12} h={22} sw={2} />
        </Group>
      ))}
    </Groups>
    <SearchBar>
      <Text $s={26} $c="#6b6c70" $ls={0.1}>Search settings</Text>
      <SquareButton $bg="#e6e9ed" $c="#191b22"><Icon name="gear" w={26} sw={2.8} /></SquareButton>
    </SearchBar>
  </Panel>
);

/* ---------- canvas ---------- */

const Canvas = styled.section`
  flex: 1;
  min-width: 0;
  padding: 107px 0 0 422px;
  background: #fafafa;
  font-family: Roboto, "Liberation Sans", sans-serif;
`;
const TabsElement = styled.div`
  position: relative;
  width: 1800px;
  height: 320px;
  box-shadow: inset 0 0 0 2px #58a4bd;
  color: #000;
`;
const TabRow = styled.div`
  display: flex;
`;
const TabItem = styled.div<{ $on?: boolean }>`
  width: 164.6px;
  height: 131px;
  background: ${(p) => (p.$on ? "#dededf" : "transparent")};
  display: flex;
  align-items: center;
  justify-content: center;
`;
const TabContent = styled.div`
  padding: 41px 40px 0;
`;
const Heading = styled.h3`
  margin: 0;
  font-size: 47.5px;
  line-height: 57px;
  font-weight: 700;
`;
const Paragraph = styled.p`
  margin: 0;
  font-size: 30px;
  line-height: 54px;
`;
const ActionBar = styled.div`
  position: absolute;
  left: 816px;
  top: 297px;
  width: 168px;
  height: 42px;
  background: #1ea0e6;
  color: #fff;
  display: flex;
`;

const CanvasArea = () => (
  <Canvas>
    <TabsElement>
      <TabRow>{[1, 2, 3, 4, 5, 6].map((n) => <TabItem key={n} $on={n === 2}><Text $s={30}>{`Item ${n}`}</Text></TabItem>)}</TabRow>
      <TabContent>
        <Heading>Item 2</Heading>
        <Paragraph>Tab content here</Paragraph>
      </TabContent>
      <ActionBar>
        <Cell $w={42}><Glyph viewBox="0 0 24 24" $w={24} $sw={2}><path d="M12 0V24M0 12H24" /></Glyph></Cell>
        {["columns", "splitH", "splitV"].map((n) => <Cell key={n} $w={42}><Icon name={n} w={24} sw={2} /></Cell>)}
      </ActionBar>
    </TabsElement>
  </Canvas>
);

/* ---------- structure panel ---------- */

const Structure = styled.section`
  flex: none;
  width: 618px;
  border-left: 2.02px solid ${line};
  border-right: 2.02px solid #cfd0d3;
`;
const StructHead = styled.div`
  height: 120px;
  padding: 0 30px 0 31px;
  border-bottom: 2.02px solid ${line};
  color: ${muted};
  display: flex;
  align-items: center;
  justify-content: space-between;
`;
const Tree = styled.div`
  position: relative;
  padding: 32px 33px 0 8px;
  display: flex;
  flex-direction: column;
  gap: 10px;
`;
const Node = styled.div<{ $d: number }>`
  position: relative;
  height: 60px;
  padding-left: ${(p) => p.$d * 30}px;
  display: flex;
  align-items: center;
`;
const NodeBox = styled.div<{ $on?: boolean }>`
  flex: 1;
  height: 60px;
  padding-left: 16px;
  border: 2.02px solid ${(p) => (p.$on ? "#fdeaf3" : "#c4c5ca")};
  border-radius: 7px;
  background: ${(p) => (p.$on ? "#fdeaf3" : "transparent")};
  color: ${(p) => (p.$on ? "#ea9cc1" : "#97989d")};
  display: flex;
  align-items: center;
  gap: 18px;
`;
const Loop = styled.div`
  position: absolute;
  right: -29px;
  top: 23px;
  color: #9a9b9f;
`;
const Guides = styled.svg`
  position: absolute;
  left: 84px;
  top: 250px;
  width: 50px;
  height: 170px;
`;

const nodes: { label: string; icon: string; d: number; open: boolean; on?: boolean; loop?: boolean }[] = [
  { label: "Section", icon: "section", d: 0, open: true },
  { label: "Container", icon: "container", d: 1, open: true },
  { label: "Pro Tabs", icon: "tabs", d: 2, open: true, on: true },
  { label: "Tabs list", icon: "block", d: 3, open: true },
  { label: "Tab Item", icon: "div", d: 4, open: false, loop: true },
  { label: "Tabs Content", icon: "block", d: 3, open: false },
];

const StructurePanel = () => (
  <Structure>
    <StructHead>
      <Text $s={29.5} $w={600} $c="#17181c" $ls={0.7}>Structure</Text>
      <Tools>
        <Cell $w={52}><Icon name="clipboard" w={27} h={33} /></Cell>
        <Cell $w={52}><Icon name="download" w={32} h={26} /></Cell>
        <Cell $w={52}><Icon name="trash" w={29} h={33} /></Cell>
        <Cell $w={52}><Icon name="expand" w={32} /></Cell>
      </Tools>
    </StructHead>
    <Tree>
      <Guides viewBox="0 0 50 170" fill="none" stroke="#a0a1a5" strokeWidth="2" strokeDasharray="2 2">
        <path d="M3 3V165M3 23.5H14M3 93.5H42M3 163.5H14" />
      </Guides>
      {nodes.map((n) => (
        <Node key={n.label} $d={n.d}>
          <Cell $w={40} $c={n.on ? "#eaa3c5" : "#8f9095"}>
            {n.open ? <Icon name="down" w={24} h={13} sw={2} /> : <Icon name="right" w={13} h={24} sw={1.8} />}
          </Cell>
          <NodeBox $on={n.on}>
            <Icon name={n.icon} w={28} h={n.icon === "tabs" ? 24 : 28} sw={2} />
            <Text $s={24} $c={n.on ? "#cf3f80" : "#1b1c21"} $ls={0.45}>{n.label}</Text>
          </NodeBox>
          {n.loop && <Loop><Icon name="infinity" w={24} h={14} sw={2} /></Loop>}
        </Node>
      ))}
    </Tree>
  </Structure>
);

const Cursor = styled.svg`
  position: absolute;
  left: 729px;
  top: 123px;
  width: 25px;
  height: 38px;
`;

export default function App() {
  return (
    <>
      <GlobalStyle />
      <Desktop>
        <Wallpaper viewBox="0 0 4112 2658">
          <defs>
            <linearGradient id="streak"><stop offset="0" stopColor="#6a6a6a" /><stop offset=".28" stopColor="#5c5c5c" /><stop offset=".4" stopColor="#333" /><stop offset="1" stopColor="#0d0d0d" /></linearGradient>
            <linearGradient id="glow" x1="0" y1="0" x2="0" y2="1"><stop offset="0" stopColor="#2a2a2a" stopOpacity="0" /><stop offset="1" stopColor="#2a2a2a" stopOpacity=".7" /></linearGradient>
          </defs>
          <rect width="4112" height="2658" fill="#0c0c0c" />
          <path d="M1506 0H1680L1660 80H1495Z" fill="url(#streak)" />
          <path d="M0 930L140 958V1004L0 976Z" fill="url(#glow)" />
          <path d="M0 976L140 1004" stroke="#3c3c3c" strokeWidth="4" />
          <path d="M0 1H3016M3092 1H4112" stroke="#4e5250" strokeWidth="2" />
        </Wallpaper>
        <TopMenu />
        <Work>
          <Dock><RecorderWidget /></Dock>
          <Window>
            <BrowserChrome />
            <Toolbar />
            <Body>
              <LeftRail />
              <ElementPanel />
              <CanvasArea />
              <StructurePanel />
            </Body>
          </Window>
        </Work>
        <Cursor viewBox="0 0 25 38"><path d="M2 2V29.5L8.5 24L13.5 35.5L18.5 33.5L13.5 22.5H22.5Z" fill="#000" stroke="#fff" strokeWidth="2" strokeLinejoin="round" /></Cursor>
      </Desktop>
    </>
  );
}
